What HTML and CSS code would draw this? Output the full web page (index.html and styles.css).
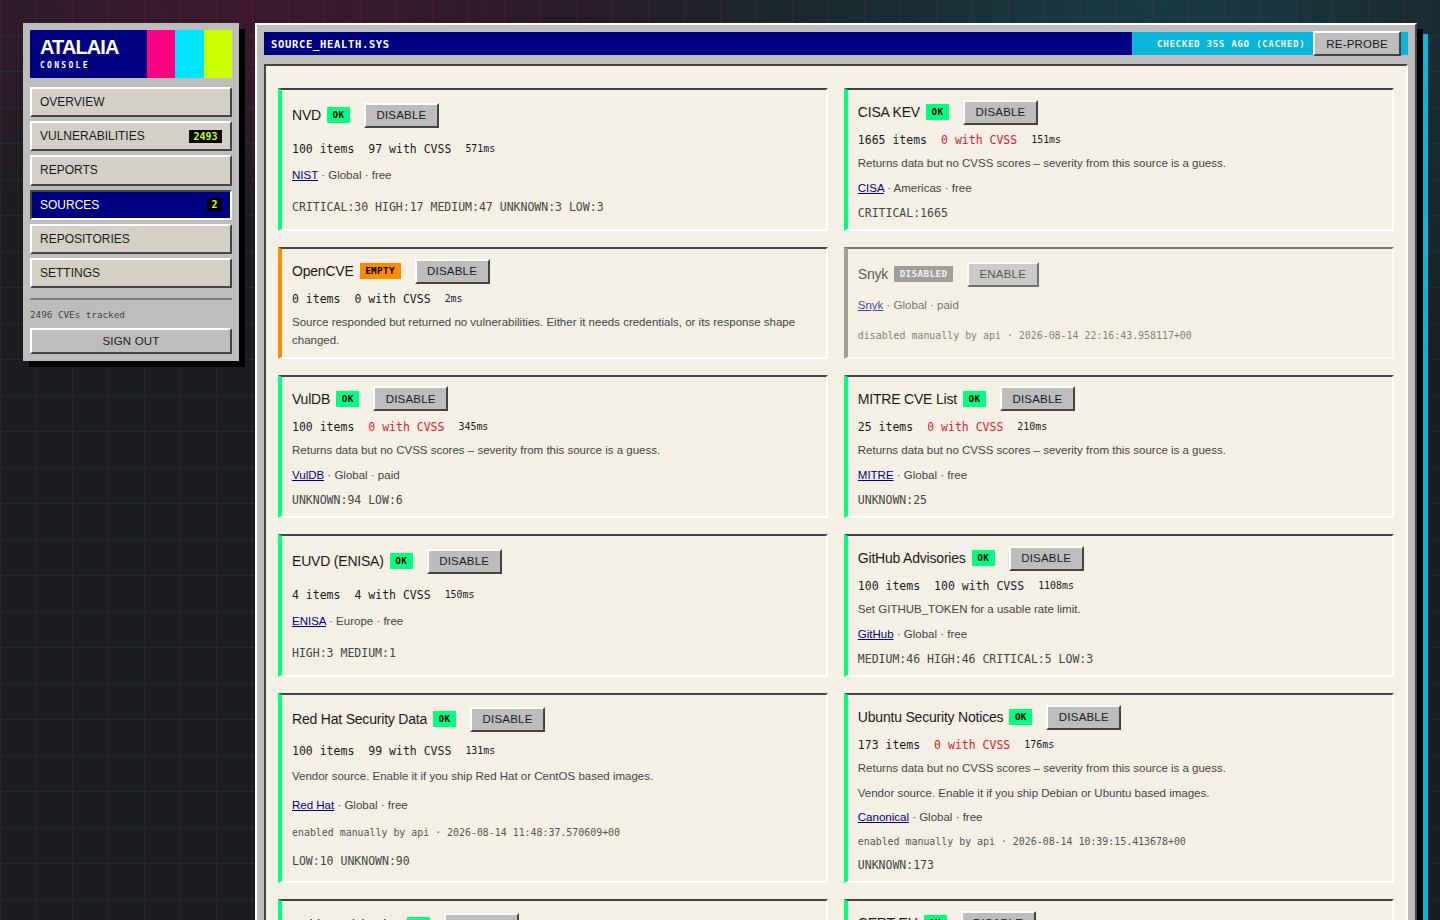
FILE: index.html
```html
<!DOCTYPE html>
<html lang="en">

<head>
    <meta charset="utf-8">
    <meta name="viewport" content="width=device-width, initial-scale=1.0">
    <title>Atalaia Console</title>

    <link rel="stylesheet" href="styles.css">
</head>

<body>
    <aside class="sidebar">
        <div class="brand">
            <div class="brand-text">
                <div class="brand-name">ATALAIA</div>
                <div class="brand-sub">CONSOLE</div>
            </div>
            <span class="stripe stripe-pink"></span>
            <span class="stripe stripe-cyan"></span>
            <span class="stripe stripe-lime"></span>
        </div>
        <nav class="nav">
            <a class="nav-item">OVERVIEW</a>
            <a class="nav-item">VULNERABILITIES <span class="count">2493</span></a>
            <a class="nav-item">REPORTS</a>
            <a class="nav-item active">SOURCES <span class="count">2</span></a>
            <a class="nav-item">REPOSITORIES</a>
            <a class="nav-item">SETTINGS</a>
        </nav>
        <div class="side-foot">
            <p class="tracked">2496 CVEs tracked</p>
            <button class="btn signout">SIGN OUT</button>
        </div>
    </aside>

    <main class="window">
        <header class="titlebar">
            <h1>SOURCE_HEALTH.SYS</h1>
            <div class="status">CHECKED 35S AGO (CACHED)</div>
            <button class="btn">RE-PROBE</button>
            <span class="titlebar-end"></span>
        </header>

        <section class="panel">
            <article class="card">
                <div class="card-head"><h2>NVD</h2><span class="badge ok">OK</span><button class="btn">DISABLE</button></div>
                <p class="stats"><span>100 items</span><span>97 with CVSS</span><small>571ms</small></p>
                <p class="meta"><a href="#">NIST</a> · Global · free</p>
                <p class="sev">CRITICAL:30 HIGH:17 MEDIUM:47 UNKNOWN:3 LOW:3</p>
            </article>
            <article class="card">
                <div class="card-head"><h2>CISA KEV</h2><span class="badge ok">OK</span><button class="btn">DISABLE</button></div>
                <p class="stats"><span>1665 items</span><span class="red">0 with CVSS</span><small>151ms</small></p>
                <p class="meta">Returns data but no CVSS scores – severity from this source is a guess.</p>
                <p class="meta"><a href="#">CISA</a> · Americas · free</p>
                <p class="sev">CRITICAL:1665</p>
            </article>

            <article class="card empty">
                <div class="card-head"><h2>OpenCVE</h2><span class="badge warn">EMPTY</span><button class="btn">DISABLE</button></div>
                <p class="stats"><span>0 items</span><span>0 with CVSS</span><small>2ms</small></p>
                <p class="meta">Source responded but returned no vulnerabilities. Either it needs credentials, or its response shape changed.</p>
            </article>
            <article class="card off">
                <div class="card-head"><h2>Snyk</h2><span class="badge gray">DISABLED</span><button class="btn">ENABLE</button></div>
                <p class="meta"><a href="#">Snyk</a> · Global · paid</p>
                <p class="note">disabled manually by api · 2026-08-14 22:16:43.958117+00</p>
            </article>

            <article class="card">
                <div class="card-head"><h2>VulDB</h2><span class="badge ok">OK</span><button class="btn">DISABLE</button></div>
                <p class="stats"><span>100 items</span><span class="red">0 with CVSS</span><small>345ms</small></p>
                <p class="meta">Returns data but no CVSS scores – severity from this source is a guess.</p>
                <p class="meta"><a href="#">VulDB</a> · Global · paid</p>
                <p class="sev">UNKNOWN:94 LOW:6</p>
            </article>
            <article class="card">
                <div class="card-head"><h2>MITRE CVE List</h2><span class="badge ok">OK</span><button class="btn">DISABLE</button></div>
                <p class="stats"><span>25 items</span><span class="red">0 with CVSS</span><small>210ms</small></p>
                <p class="meta">Returns data but no CVSS scores – severity from this source is a guess.</p>
                <p class="meta"><a href="#">MITRE</a> · Global · free</p>
                <p class="sev">UNKNOWN:25</p>
            </article>

            <article class="card">
                <div class="card-head"><h2>EUVD (ENISA)</h2><span class="badge ok">OK</span><button class="btn">DISABLE</button></div>
                <p class="stats"><span>4 items</span><span>4 with CVSS</span><small>150ms</small></p>
                <p class="meta"><a href="#">ENISA</a> · Europe · free</p>
                <p class="sev">HIGH:3 MEDIUM:1</p>
            </article>
            <article class="card">
                <div class="card-head"><h2>GitHub Advisories</h2><span class="badge ok">OK</span><button class="btn">DISABLE</button></div>
                <p class="stats"><span>100 items</span><span>100 with CVSS</span><small>1108ms</small></p>
                <p class="meta">Set GITHUB_TOKEN for a usable rate limit.</p>
                <p class="meta"><a href="#">GitHub</a> · Global · free</p>
                <p class="sev">MEDIUM:46 HIGH:46 CRITICAL:5 LOW:3</p>
            </article>

            <article class="card">
                <div class="card-head"><h2>Red Hat Security Data</h2><span class="badge ok">OK</span><button class="btn">DISABLE</button></div>
                <p class="stats"><span>100 items</span><span>99 with CVSS</span><small>131ms</small></p>
                <p class="meta">Vendor source. Enable it if you ship Red Hat or CentOS based images.</p>
                <p class="meta"><a href="#">Red Hat</a> · Global · free</p>
                <p class="note">enabled manually by api · 2026-08-14 11:48:37.570609+00</p>
                <p class="sev">LOW:10 UNKNOWN:90</p>
            </article>
            <article class="card">
                <div class="card-head"><h2>Ubuntu Security Notices</h2><span class="badge ok">OK</span><button class="btn">DISABLE</button></div>
                <p class="stats"><span>173 items</span><span class="red">0 with CVSS</span><small>176ms</small></p>
                <p class="meta">Returns data but no CVSS scores – severity from this source is a guess.</p>
                <p class="meta">Vendor source. Enable it if you ship Debian or Ubuntu based images.</p>
                <p class="meta"><a href="#">Canonical</a> · Global · free</p>
                <p class="note">enabled manually by api · 2026-08-14 10:39:15.413678+00</p>
                <p class="sev">UNKNOWN:173</p>
            </article>

            <article class="card">
                <div class="card-head"><h2>Debian Advisories</h2><span class="badge ok">OK</span><button class="btn">DISABLE</button></div>
                <p class="stats"><span>100 items</span><span class="red">0 with CVSS</span><small>98ms</small></p>
                <p class="meta">Returns data but no CVSS scores – severity from this source is a guess.</p>
                <p class="meta"><a href="#">Debian</a> · Global · free</p>
                <p class="sev">UNKNOWN:100</p>
            </article>
            <article class="card">
                <div class="card-head"><h2>CERT-EU</h2><span class="badge ok">OK</span><button class="btn">DISABLE</button></div>
                <p class="stats"><span>40 items</span><span class="red">0 with CVSS</span><small>120ms</small></p>
                <p class="meta">Returns data but no CVSS scores – severity from this source is a guess.</p>
                <p class="meta"><a href="#">CERT-EU</a> · Europe · free</p>
                <p class="note">enabled manually by api · 2026-08-14 10:39:15.413678+00</p>
                <p class="sev">UNKNOWN:40</p>
            </article>
        </section>
    </main>
</body>

</html>
```
FILE: styles.css
```css
* {
    box-sizing: border-box;
}

html,
body {
    height: 920px;
    overflow: hidden;
}

body {
    margin: 0;
    padding: 23px 23px 0;
    display: flex;
    align-items: flex-start;
    gap: 16px;
    font-family: "Liberation Sans", Arial, sans-serif;
    color: #1a1a1a;
    background-color: #1c1d23;
    background-image:
        linear-gradient(rgba(0, 200, 220, 0.08) 1px, transparent 1px),
        linear-gradient(90deg, rgba(255, 0, 128, 0.14) 1px, transparent 1px),
        radial-gradient(ellipse 520px 220px at 18% 0, rgba(255, 0, 110, 0.15), transparent),
        radial-gradient(ellipse 560px 420px at 80% 0, rgba(0, 229, 255, 0.15), transparent);
    background-size: 36px 36px, 36px 36px, 100% 100%, 100% 100%;
    background-position: 0 -1px, 0 0, 0 0, 0 0;
}

/* sidebar */

.sidebar {
    width: 216px;
    flex: none;
    padding: 7px;
    background: #bdbdbd;
    box-shadow: 6px 6px 0 #000;
}

.brand {
    display: flex;
    height: 48px;
    background: #000080;
}

.brand-text {
    flex: 1;
    padding: 7px 10px;
    color: #fff;
}

.brand-name {
    font-size: 20px;
    line-height: 20px;
    font-weight: 700;
    letter-spacing: -0.9px;
}

.brand-sub {
    margin-top: 4px;
    font-family: "DejaVu Sans Mono", monospace;
    font-size: 8px;
    line-height: 10px;
    font-weight: 700;
    letter-spacing: 2.3px;
}

.stripe {
    width: 28.4px;
}

.stripe-pink {
    background: #ff0080;
}

.stripe-cyan {
    background: #00e5ff;
}

.stripe-lime {
    background: #ccff00;
}

.nav {
    display: flex;
    flex-direction: column;
    gap: 4px;
    margin-top: 9px;
}

.nav-item {
    display: flex;
    justify-content: space-between;
    align-items: center;
    height: 30.2px;
    padding: 0 8px;
    font-size: 12px;
    color: #1a1a1a;
    background: #d4d0c8;
    border: 2px solid;
    border-color: #fff #444 #444 #fff;
}

.nav-item.active {
    color: #fff;
    background: #000080;
    border-color: #444 #fff #fff #444;
}

.count {
    padding: 0 4.5px;
    font-family: "DejaVu Sans Mono", monospace;
    font-size: 10px;
    line-height: 13px;
    font-weight: 700;
    color: #ccff00;
    background: #000;
}

.side-foot {
    margin-top: 10px;
    border-top: 2px solid #808080;
}

.tracked {
    margin: 8px 0 7px;
    font-family: "DejaVu Sans Mono", monospace;
    font-size: 9.28px;
    line-height: 13px;
    color: #444;
}

.btn {
    height: 25px;
    padding: 0 10.5px;
    font-family: "Liberation Sans", Arial, sans-serif;
    font-size: 11.5px;
    letter-spacing: 0.2px;
    color: #1a1a1a;
    background: #bdbdbd;
    border: 2px solid;
    border-color: #fff #444 #444 #fff;
    border-radius: 0;
}

.signout {
    display: block;
    width: 100%;
    height: 26px;
}

/* main window */

.window {
    flex: none;
    width: 1162px;
    padding: 7px;
    background: #bdbdbd;
    border: 2px solid;
    border-color: #fff #444 #444 #fff;
    box-shadow: 6px 6px 0 #000, 11px 11px 0 #08b6d9;
}

.titlebar {
    display: flex;
    align-items: center;
    height: 23px;
    background: #000080;
}

.titlebar h1 {
    flex: 1;
    margin: 0;
    padding-left: 7px;
    font-family: "DejaVu Sans Mono", monospace;
    font-size: 10.5px;
    font-weight: 700;
    letter-spacing: 0.67px;
    color: #fff;
}

.status {
    width: 181px;
    height: 23px;
    padding-right: 8px;
    font-family: "DejaVu Sans Mono", monospace;
    font-size: 9.28px;
    line-height: 23px;
    font-weight: 700;
    letter-spacing: 0.6px;
    text-align: right;
    color: #f4f0e6;
    background: #08b6d9;
}

.titlebar .btn {
    height: 25px;
    padding: 0 11px;
}

.titlebar-end {
    width: 7px;
    height: 23px;
    background: #08b6d9;
}

.panel {
    display: grid;
    grid-template-columns: 549.8px 549.8px;
    column-gap: 16px;
    row-gap: 16px;
    margin-top: 9px;
    padding: 22px 12px;
    background: #f4f0e6;
    border: 2px solid;
    border-color: #444 #fff #fff #444;
}

/* no row template: spare height is shared out between the rows */
.card {
    display: grid;
    gap: 6.6px;
    padding: 9.5px 10px 7px 10px;
    background: #f4f0e6;
    border: solid;
    border-width: 2px 2px 2px 4px;
    border-color: #444 #fff #fff #00ff80;
}

.card.empty {
    border-left-color: #ff8c00;
}

.card.off {
    opacity: 0.72;
    border-left-color: #808080;
}

.card p {
    margin: 0;
}

.card-head {
    display: flex;
    align-items: center;
    gap: 6px;
    margin-bottom: 1px;
}

.card-head h2 {
    margin: 0;
    font-size: 14px;
    font-weight: 400;
    letter-spacing: -0.2px;
}

.card-head .btn {
    margin-left: 8px;
}

.badge {
    padding: 0 5.5px;
    font-family: "DejaVu Sans Mono", monospace;
    font-size: 9.28px;
    line-height: 16px;
    font-weight: 700;
    letter-spacing: 0.4px;
    color: #000;
}

.badge.ok {
    background: #00ff80;
}

.badge.warn {
    background: #ff8c00;
}

.badge.gray {
    color: #f4f0e6;
    background: #808080;
}

.stats {
    display: flex;
    align-items: center;
    gap: 14px;
    font-family: "DejaVu Sans Mono", monospace;
    font-size: 11.5px;
    line-height: 16.6px;
}

.stats small {
    font-size: 9.92px;
}

.red {
    color: #e0182d;
}

.meta {
    font-size: 11.5px;
    line-height: 17.8px;
    color: #444;
}

.meta a {
    color: #000080;
}

.sev {
    font-family: "DejaVu Sans Mono", monospace;
    font-size: 11.5px;
    line-height: 18px;
    color: #444;
}

.note {
    font-family: "DejaVu Sans Mono", monospace;
    font-size: 9.92px;
    line-height: 16px;
    color: #555;
}
```
